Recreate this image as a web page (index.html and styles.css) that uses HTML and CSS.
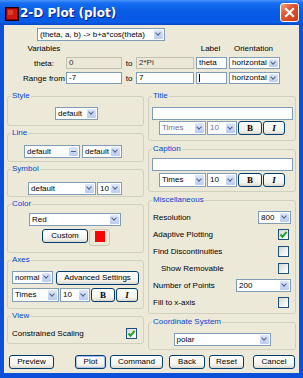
FILE: index.html
```html
<!DOCTYPE html>
<html lang="en">
<head>
    <meta charset="UTF-8">
    <title>2-D Plot (plot)</title>
    <link rel="stylesheet" href="styles.css">
</head>
<body>

    <div class="window">
        <div class="titlebar">
            <svg class="app-icon" width="14" height="14" viewBox="0 0 14 14">
                <rect x="0.5" y="0.5" width="13" height="13" fill="#8a0000" stroke="#1a0000"/>
                <rect x="2" y="2" width="10" height="10" fill="#cc1a10"/>
                <rect x="3" y="3" width="5" height="5" fill="#e0402a"/>
            </svg>
            <span class="title">2-D Plot (plot)</span>
            <span class="close">
                <svg width="17" height="17" viewBox="0 0 17 17">
                    <path d="M5 5 L12 12 M12 5 L5 12" stroke="#fff" stroke-width="2.2" stroke-linecap="square"/>
                </svg>
            </span>
        </div>

        <div class="client">
            <!-- expression -->
            <div class="expr-row">
                <span class="sel w-expr"><span class="val">(theta, a, b) -&gt; b+a*cos(theta)</span><span class="arr"></span></span>
            </div>

            <!-- variables -->
            <div class="vars">
                <span class="vhead">Variables</span><span></span><span></span><span></span>
                <span class="vhead">Label</span><span class="vhead">Orientation</span>

                <span class="vname">theta:</span>
                <span class="inp dis">0</span>
                <span class="to">to</span>
                <span class="inp dis">2*Pi</span>
                <span class="inp lbl">theta</span>
                <span class="sel orient"><span class="val">horizontal</span><span class="arr"></span></span>

                <span class="vname">Range from</span>
                <span class="inp">-7</span>
                <span class="to">to</span>
                <span class="inp">7</span>
                <span class="inp lbl"><span class="caret"></span></span>
                <span class="sel orient"><span class="val">horizontal</span><span class="arr"></span></span>
            </div>

            <div class="columns">
                <div class="col col-left">
                    <fieldset class="fs-style">
                        <legend>Style</legend>
                        <div class="row in-style">
                            <span class="sel w43"><span class="val">default</span><span class="arr"></span></span>
                        </div>
                    </fieldset>
                    <fieldset class="fs-line">
                        <legend>Line</legend>
                        <div class="row gap2 in-line">
                            <span class="sel w56"><span class="val">default</span><span class="arr dash"></span></span>
                            <span class="sel w40"><span class="val">default</span><span class="arr"></span></span>
                        </div>
                    </fieldset>
                    <fieldset class="fs-symbol">
                        <legend>Symbol</legend>
                        <div class="row gap1 in-symbol">
                            <span class="sel w68"><span class="val">default</span><span class="arr"></span></span>
                            <span class="sel w25"><span class="val">10</span><span class="arr"></span></span>
                        </div>
                    </fieldset>
                    <fieldset class="fs-color">
                        <legend>Color</legend>
                        <div class="row in-color">
                            <span class="sel w92"><span class="val">Red</span><span class="arr"></span></span>
                        </div>
                        <div class="row custom-row">
                            <span class="btn w46">Custom</span>
                            <span class="swatch"><span class="red"></span></span>
                        </div>
                    </fieldset>
                    <fieldset class="fs-axes">
                        <legend>Axes</legend>
                        <div class="row gap3 in-axes">
                            <span class="sel w41"><span class="val">normal</span><span class="arr"></span></span>
                            <span class="btn w83">Advanced Settings</span>
                        </div>
                        <div class="row gap1 font-row in-axes">
                            <span class="sel w47"><span class="val">Times</span><span class="arr"></span></span>
                            <span class="sel w30"><span class="val">10</span><span class="arr"></span></span>
                            <span class="btn w24 bold">B</span>
                            <span class="btn w22 ital">I</span>
                        </div>
                    </fieldset>
                    <fieldset class="fs-view">
                        <legend>View</legend>
                        <div class="row spread">
                            <span>Constrained Scaling</span>
                            <span class="chk on"><svg width="9" height="9" viewBox="0 0 9 9"><path d="M1.5 4.5 L3.5 6.8 L7.6 1.8" fill="none" stroke="#21a121" stroke-width="2"/></svg></span>
                        </div>
                    </fieldset>
                </div>

                <div class="col col-right">
                    <fieldset class="fs-title">
                        <legend>Title</legend>
                        <span class="inp wide"></span>
                        <div class="row gap1 font-row fr-title">
                            <span class="sel w47 faint"><span class="val">Times</span><span class="arr"></span></span>
                            <span class="sel w30 faint"><span class="val">10</span><span class="arr"></span></span>
                            <span class="btn w24 bold">B</span>
                            <span class="btn w22 ital">I</span>
                        </div>
                    </fieldset>
                    <fieldset class="fs-caption">
                        <legend>Caption</legend>
                        <span class="inp wide"></span>
                        <div class="row gap1 font-row fr-caption">
                            <span class="sel w47"><span class="val">Times</span><span class="arr"></span></span>
                            <span class="sel w30"><span class="val">10</span><span class="arr"></span></span>
                            <span class="btn w24 bold">B</span>
                            <span class="btn w22 ital">I</span>
                        </div>
                    </fieldset>
                    <fieldset class="fs-misc">
                        <legend>Miscellaneous</legend>
                        <div class="mrow">
                            <span>Resolution</span>
                            <span class="sel w33"><span class="val">800</span><span class="arr"></span></span>
                        </div>
                        <div class="mrow">
                            <span>Adaptive Plotting</span>
                            <span class="chk on"><svg width="9" height="9" viewBox="0 0 9 9"><path d="M1.5 4.5 L3.5 6.8 L7.6 1.8" fill="none" stroke="#21a121" stroke-width="2"/></svg></span>
                        </div>
                        <div class="mrow">
                            <span>Find Discontinuities</span>
                            <span class="chk"></span>
                        </div>
                        <div class="mrow">
                            <span class="indent">Show Removable</span>
                            <span class="chk"></span>
                        </div>
                        <div class="mrow">
                            <span>Number of Points</span>
                            <span class="sel w55"><span class="val">200</span><span class="arr"></span></span>
                        </div>
                        <div class="mrow">
                            <span>Fill to x-axis</span>
                            <span class="chk"></span>
                        </div>
                    </fieldset>
                    <fieldset class="fs-coord">
                        <legend>Coordinate System</legend>
                        <div class="row center">
                            <span class="sel w97"><span class="val">polar</span><span class="arr"></span></span>
                        </div>
                    </fieldset>
                </div>
            </div>

            <!-- bottom buttons -->
            <div class="buttons">
                <span class="btn w45">Preview</span>
                <span class="btn w31 b-plot default">Plot</span>
                <span class="btn w53 b-command">Command</span>
                <span class="btn w36 b-back">Back</span>
                <span class="btn w35 b-reset">Reset</span>
                <span class="btn w42 b-cancel">Cancel</span>
            </div>
        </div>
    </div>

</body>
</html>
```

FILE: styles.css
```css
*{
    box-sizing: border-box;
}
body{
    margin: 0;font-family: "Liberation Sans", Arial, sans-serif;font-size: 8px;color: #000;
}
.window{
    width: 303px;height: 378px;background: #0a50d8;display: flex;flex-direction: column;
}
/* title bar */
.titlebar{
    height: 25px;display: flex;align-items: center;padding: 0 4px 0 5px;
    background: linear-gradient(#4a92f8 0%, #166ef0 12%, #0a5ee8 40%, #0657e6 70%, #0a5ee8 88%, #0446c4 100%);
}
.app-icon{
    margin-top: 2px;
}
.title{
    font-family: "DejaVu Sans", sans-serif;font-weight: bold;font-size: 12px;color: #fff;margin-left: 1px;
    text-shadow: 1px 1px #0a1e8a;
}
.close{
    margin-left: auto;width: 19px;height: 19px;border: 1px solid #fff;border-radius: 3px;display: flex;
    background: linear-gradient(135deg, #f3a48a 0%, #e2532f 40%, #cf3a18 100%);
}
.client{
    flex: 1;margin: 0 4px 5px;background: #ece9d8;display: flex;flex-direction: column;
}

/* generic controls */
.sel{
    display: flex;height: 13px;border: 1px solid #7f9db9;background: #fff;
}
.sel .val{
    flex: 1;padding-left: 2px;line-height: 11px;white-space: nowrap;overflow: hidden;
}
.sel .arr{
    width: 9px;margin: 1px;border-radius: 1px;position: relative;
    background: linear-gradient(#dde7fc, #b9cbf3);
}
.sel .arr::after{
    content: "";position: absolute;left: 2px;top: 1px;width: 3px;height: 3px;
    border-right: 1.5px solid #4d6185;border-bottom: 1.5px solid #4d6185;transform: rotate(45deg);
}
.sel .arr.dash::after{
    left: 2px;top: 4px;width: 5px;height: 0;border-right: 0;border-bottom: 1px solid #4d6185;transform: none;
}
.sel.faint .val{
    color: #6f6f8f;
}
.inp{
    display: block;height: 12px;border: 1px solid #7f9db9;background: #fff;padding-left: 2px;line-height: 10px;
}
.inp.dis{
    background: #ebe8d8;border-color: #c3c0b0;color: #303030;
}
.btn{
    display: block;height: 14px;border: 1px solid #003c74;border-radius: 3px;text-align: center;line-height: 12px;
    background: linear-gradient(#ffffff, #f4f3ee 70%, #dcd8cc);
}
.btn.default{
    box-shadow: inset 0 0 0 1px #a8c2f2;
}
.btn.bold{
    font-family: "Liberation Serif", serif;font-weight: bold;font-size: 9px;
}
.btn.ital{
    font-family: "Liberation Serif", serif;font-weight: bold;font-style: italic;font-size: 9px;
}
.chk{
    width: 11px;height: 11px;border: 1px solid #1c5180;display: flex;align-items: center;justify-content: center;
    background: linear-gradient(135deg, #d6d5cc, #f6f6f3 70%, #fff);
}

/* widths */
.w-expr{width: 128px;}
.w22{width: 22px;}.w24{width: 24px;}.w25{width: 25px;}.w30{width: 30px;}.w31{width: 31px;}
.w33{width: 33px;}.w35{width: 35px;}.w36{width: 36px;}.w40{width: 40px;}.w41{width: 41px;}
.w42{width: 42px;}.w43{width: 43px;}.w45{width: 45px;}.w46{width: 46px;}.w47{width: 47px;}
.w53{width: 53px;}.w55{width: 55px;}.w56{width: 56px;}.w68{width: 68px;}.w83{width: 83px;}
.w92{width: 92px;}.w97{width: 97px;}

/* expression + variables */
.expr-row{
    display: flex;padding: 3px 0 0 33px;
}
.vars{
    display: grid;grid-template-columns: 44px 56px 14px 58px 33px 53px;grid-template-rows: 11px 12px 12px;
    row-gap: 3px;margin: 2px 0 0 18px;align-items: center;
}
.vhead, .vname, .to{
    text-align: center;
}
.vars .lbl, .vars .orient{
    margin-left: 2px;
}
.vars .orient{
    height: 12px;
}
.vars .orient .val{
    line-height: 10px;
}
.caret{
    display: block;width: 1px;height: 8px;background: #000;margin-top: 1px;
}

/* group boxes */
.columns{
    display: flex;gap: 4px;margin: 7px 0 0 3px;height: 259px;
}
.col{
    display: flex;flex-direction: column;
}
.col-left{
    width: 137px;gap: 2px;
}
.col-right{
    width: 148px;gap: 3px;
}
fieldset{
    margin: 0;padding: 0;min-width: 0;border: 1px solid #d0d0bf;border-radius: 3px;
}
legend{
    color: #0046d5;padding: 0 1px;margin-left: 3px;height: 10px;line-height: 10px;
}
.row{
    display: flex;
}
.row.gap1{gap: 1px;}
.row.gap2{gap: 2px;}
.row.gap3{gap: 3px;}
.row.center{justify-content: center;}
.row.spread{justify-content: space-between;align-items: center;height: 11px;margin: 0 6px 0 4px;}

.fs-style{height: 35px;padding-top: 6px;}
.fs-line{height: 34px;padding-top: 7px;}
.fs-symbol{height: 33px;padding-top: 8px;}
.fs-color{height: 54px;padding-top: 4px;}
.fs-axes{height: 54px;padding-top: 6px;}
.fs-view{height: 33px;padding-top: 7px;}

.in-style{margin-left: 47px;}
.in-line{margin-left: 16px;}
.in-symbol{margin-left: 20px;}
.in-color{margin-left: 21px;}
.in-axes{margin-left: 4px;}

.custom-row{
    margin: 3px 0 0 34px;gap: 1px;align-items: flex-start;
}
.swatch{
    width: 21px;height: 17px;border: 1px solid #cbc7b4;border-radius: 3px;display: flex;
    align-items: center;justify-content: center;
}
.swatch .red{
    width: 10px;height: 11px;background: #ff0000;margin-top: -3px;
}
.font-row{
    margin-top: 3px;
}
.font-row .sel{
    height: 14px;
}
.font-row .sel .val{
    line-height: 12px;
}
.font-row .sel .arr::after{
    top: 2px;
}

.fs-title{height: 50px;padding-top: 6px;}
.fs-caption{height: 48px;padding-top: 4px;}
.fs-misc{height: 119px;padding-top: 4px;}
.fs-coord{height: 33px;padding-top: 6px;}

.inp.wide{
    width: 141px;height: 13px;margin-left: 3px;
}
.fr-title{
    margin: 1px 0 0 10px;
}
.fr-caption{
    margin: 2px 0 0 10px;
}
.mrow{
    height: 17px;display: flex;align-items: center;justify-content: space-between;padding: 0 4px;
}
.mrow .chk{
    margin-right: 2px;
}
.indent{
    padding-left: 8px;
}

/* bottom buttons */
.buttons{
    display: flex;margin: 5px 0 0 5px;
}
.b-plot{margin-left: 21px;}
.b-command{margin-left: 4px;}
.b-back{margin-left: 6px;}
.b-reset{margin-left: 4px;}
.b-cancel{margin-left: 9px;}
```
